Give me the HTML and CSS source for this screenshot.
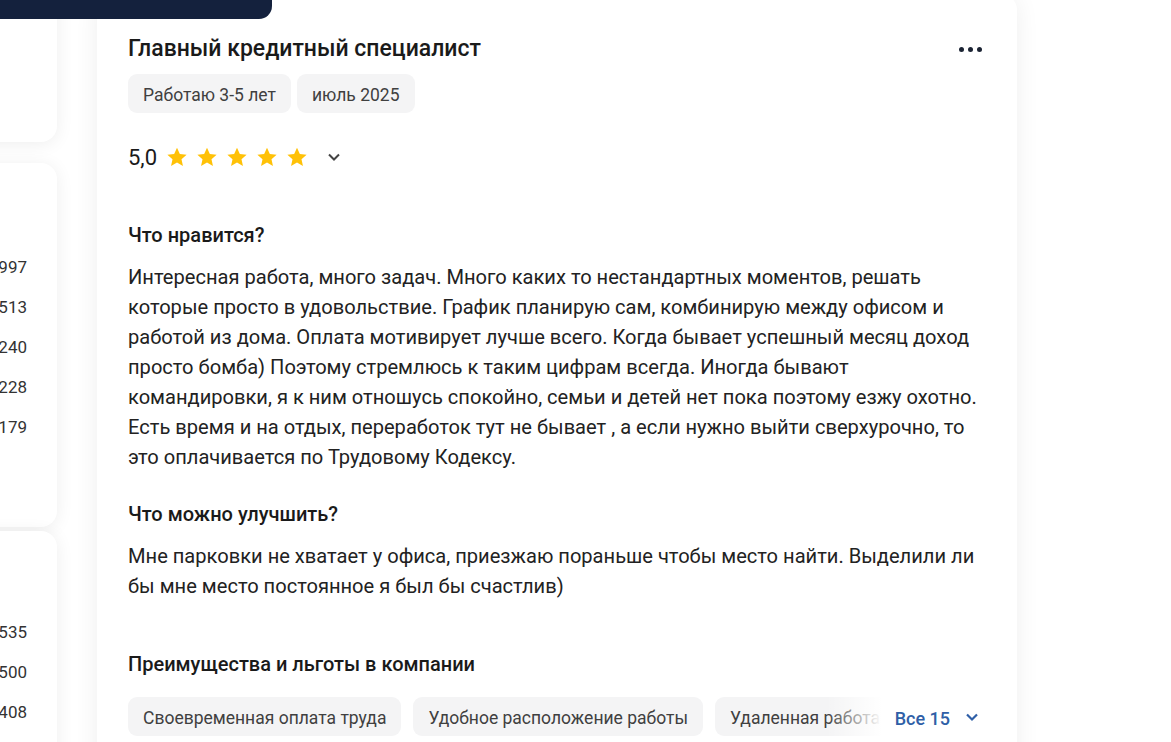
FILE: index.html
```html
<!DOCTYPE html>
<html lang="ru">
<head>
    <meta charset="UTF-8">
    <meta name="viewport" content="width=device-width, initial-scale=1.0">
    <title>Отзыв сотрудника</title>
    <link rel="stylesheet" href="styles.css">
</head>
<body>

<div class="topbar"></div>

<div class="page">
    <aside class="side">
        <div class="side-card first"></div>
        <div class="side-card second">
            <div class="side-row">1 997</div>
            <div class="side-row">1 513</div>
            <div class="side-row">1 240</div>
            <div class="side-row">1 228</div>
            <div class="side-row">1 179</div>
        </div>
        <div class="side-card third">
            <div class="side-row">1 535</div>
            <div class="side-row">1 500</div>
            <div class="side-row">1 408</div>
        </div>
    </aside>

    <main class="review">
        <div class="review-head">
            <h2 class="review-title">Главный кредитный специалист</h2>
            <button class="more" aria-label="Ещё">
                <span></span><span></span><span></span>
            </button>
        </div>
        <div class="tags">
            <span class="tag">Работаю 3-5 лет</span>
            <span class="tag">июль 2025</span>
        </div>
        <div class="rating">
            <span class="rating-value">5,0</span>
            <div class="stars">
                <svg viewBox="0 0 24 24"><path d="M12 1.8l3.1 6.9 7.4.8-5.6 5 1.6 7.4L12 18.1l-6.5 3.8 1.6-7.4-5.6-5 7.4-.8z"/></svg>
                <svg viewBox="0 0 24 24"><path d="M12 1.8l3.1 6.9 7.4.8-5.6 5 1.6 7.4L12 18.1l-6.5 3.8 1.6-7.4-5.6-5 7.4-.8z"/></svg>
                <svg viewBox="0 0 24 24"><path d="M12 1.8l3.1 6.9 7.4.8-5.6 5 1.6 7.4L12 18.1l-6.5 3.8 1.6-7.4-5.6-5 7.4-.8z"/></svg>
                <svg viewBox="0 0 24 24"><path d="M12 1.8l3.1 6.9 7.4.8-5.6 5 1.6 7.4L12 18.1l-6.5 3.8 1.6-7.4-5.6-5 7.4-.8z"/></svg>
                <svg viewBox="0 0 24 24"><path d="M12 1.8l3.1 6.9 7.4.8-5.6 5 1.6 7.4L12 18.1l-6.5 3.8 1.6-7.4-5.6-5 7.4-.8z"/></svg>
            </div>
            <svg class="chevron" viewBox="0 0 16 16"><path d="M3 5.5l5 5 5-5"/></svg>
        </div>

        <h3 class="section-title likes">Что нравится?</h3>
        <p class="section-text">Интересная работа, много задач. Много каких то нестандартных моментов, решать которые просто в удовольствие. График планирую сам, комбинирую между офисом и работой из дома. Оплата мотивирует лучше всего. Когда бывает успешный месяц доход просто бомба) Поэтому стремлюсь к таким цифрам всегда. Иногда бывают командировки, я к ним отношусь спокойно, семьи и детей нет пока поэтому езжу охотно. Есть время и на отдых, переработок тут не бывает , а если нужно выйти сверхурочно, то это оплачивается по Трудовому Кодексу.</p>

        <h3 class="section-title">Что можно улучшить?</h3>
        <p class="section-text">Мне парковки не хватает у офиса, приезжаю пораньше чтобы место найти. Выделили ли бы мне место постоянное я был бы счастлив)</p>

        <h3 class="section-title perks">Преимущества и льготы в компании</h3>
        <div class="benefits">
            <div class="benefit-list">
                <span class="tag">Своевременная оплата труда</span>
                <span class="tag">Удобное расположение работы</span>
                <span class="tag">Удаленная работа</span>
                <span class="tag">Корпоративное обучение</span>
            </div>
            <div class="benefit-more">
                <span class="fade"></span>
                <button class="all-link">Все 15
                    <svg viewBox="0 0 16 16"><path d="M3 5.5l5 5 5-5"/></svg>
                </button>
            </div>
        </div>
    </main>
</div>

</body>
</html>
```

FILE: styles.css
```css
body {
    margin: 0;
    background-color: #fff;
    font-family: Roboto, "Noto Sans", Arial, sans-serif;
    color: #1a1a1a;
    overflow: hidden;
}
.topbar {
    position: absolute;
    top: 0;
    left: 0;
    width: 272px;
    height: 19px;
    background-color: #14213d;
    border-bottom-right-radius: 13px;
    z-index: 2;
}
.page {
    display: flex;
    gap: 40px;
    align-items: flex-start;
}
.side {
    width: 257px;
    margin-left: -200px;
    display: flex;
    flex-direction: column;
}
.side-card {
    background-color: #fff;
    border-radius: 16px;
    box-shadow: 0 2px 18px rgba(0, 0, 0, 0.07);
    text-align: right;
    padding-right: 30px;
}
.side-card.first {
    height: 170px;
    margin-top: -28px;
}
.side-card.second {
    margin-top: 21px;
    padding-top: 84px;
    padding-bottom: 80px;
}
.side-card.third {
    margin-top: 4px;
    padding-top: 81px;
    padding-bottom: 60px;
}
.side-row {
    height: 40px;
    line-height: 40px;
    font-size: 17px;
    color: #333;
}
.review {
    width: 858px;
    margin-top: -6px;
    padding: 41px 31px 40px 31px;
    background-color: #fff;
    border-radius: 16px;
    box-shadow: 0 2px 24px rgba(0, 0, 0, 0.07);
}
.review-head {
    display: flex;
    justify-content: space-between;
    align-items: center;
}
.review-title {
    margin: 0;
    font-size: 23px;
    font-weight: 500;
    line-height: 28px;
    color: #1a1a1a;
}
.more {
    display: flex;
    gap: 4px;
    padding: 0;
    margin-right: 4px;
    background: none;
    border: none;
    cursor: pointer;
}
.more span {
    width: 5px;
    height: 5px;
    border-radius: 50%;
    background-color: #1b2333;
}
.tags {
    display: flex;
    gap: 6px;
    margin-top: 11px;
}
.tag {
    display: inline-flex;
    align-items: center;
    box-sizing: border-box;
    height: 39px;
    padding: 3px 15px 0;
    background-color: #f4f4f5;
    border-radius: 9px;
    font-size: 17.5px;
    color: #404040;
    white-space: nowrap;
}
.rating {
    display: flex;
    align-items: center;
    height: 28px;
    margin-top: 30px;
}
.rating-value {
    font-size: 22px;
    color: #1a1a1a;
    margin-right: 9px;
}
.stars {
    display: flex;
    gap: 8px;
}
.stars svg {
    width: 22px;
    height: 22px;
    fill: #ffc107;
}
.chevron {
    width: 16px;
    height: 16px;
    margin-left: 18px;
    fill: none;
    stroke: #444;
    stroke-width: 2;
}
.section-title {
    margin: 30px 0 0;
    font-size: 20px;
    font-weight: 500;
    line-height: 24px;
    color: #1a1a1a;
}
.section-title.likes {
    margin-top: 52px;
}
.section-title.perks {
    margin-top: 51px;
}
.section-text {
    margin: 15px 0 0;
    font-size: 20.1px;
    line-height: 30px;
    color: #222;
}
.benefits {
    position: relative;
    margin-top: 21px;
}
.benefit-list {
    display: flex;
    gap: 12px;
    overflow: hidden;
}
.benefit-more {
    position: absolute;
    top: 0;
    right: 0;
    height: 39px;
    display: flex;
    align-items: center;
}
.fade {
    width: 56px;
    height: 39px;
    background: linear-gradient(to right, rgba(255, 255, 255, 0), #fff);
}
.all-link {
    display: flex;
    align-items: center;
    gap: 14px;
    height: 39px;
    padding: 3px 6px 0 13px;
    background-color: #fff;
    border: none;
    font-family: inherit;
    font-size: 18px;
    font-weight: 500;
    color: #2f5fa7;
    cursor: pointer;
}
.all-link svg {
    width: 16px;
    height: 16px;
    margin-top: -3px;
    fill: none;
    stroke: #2f5fa7;
    stroke-width: 2.2;
}
```
